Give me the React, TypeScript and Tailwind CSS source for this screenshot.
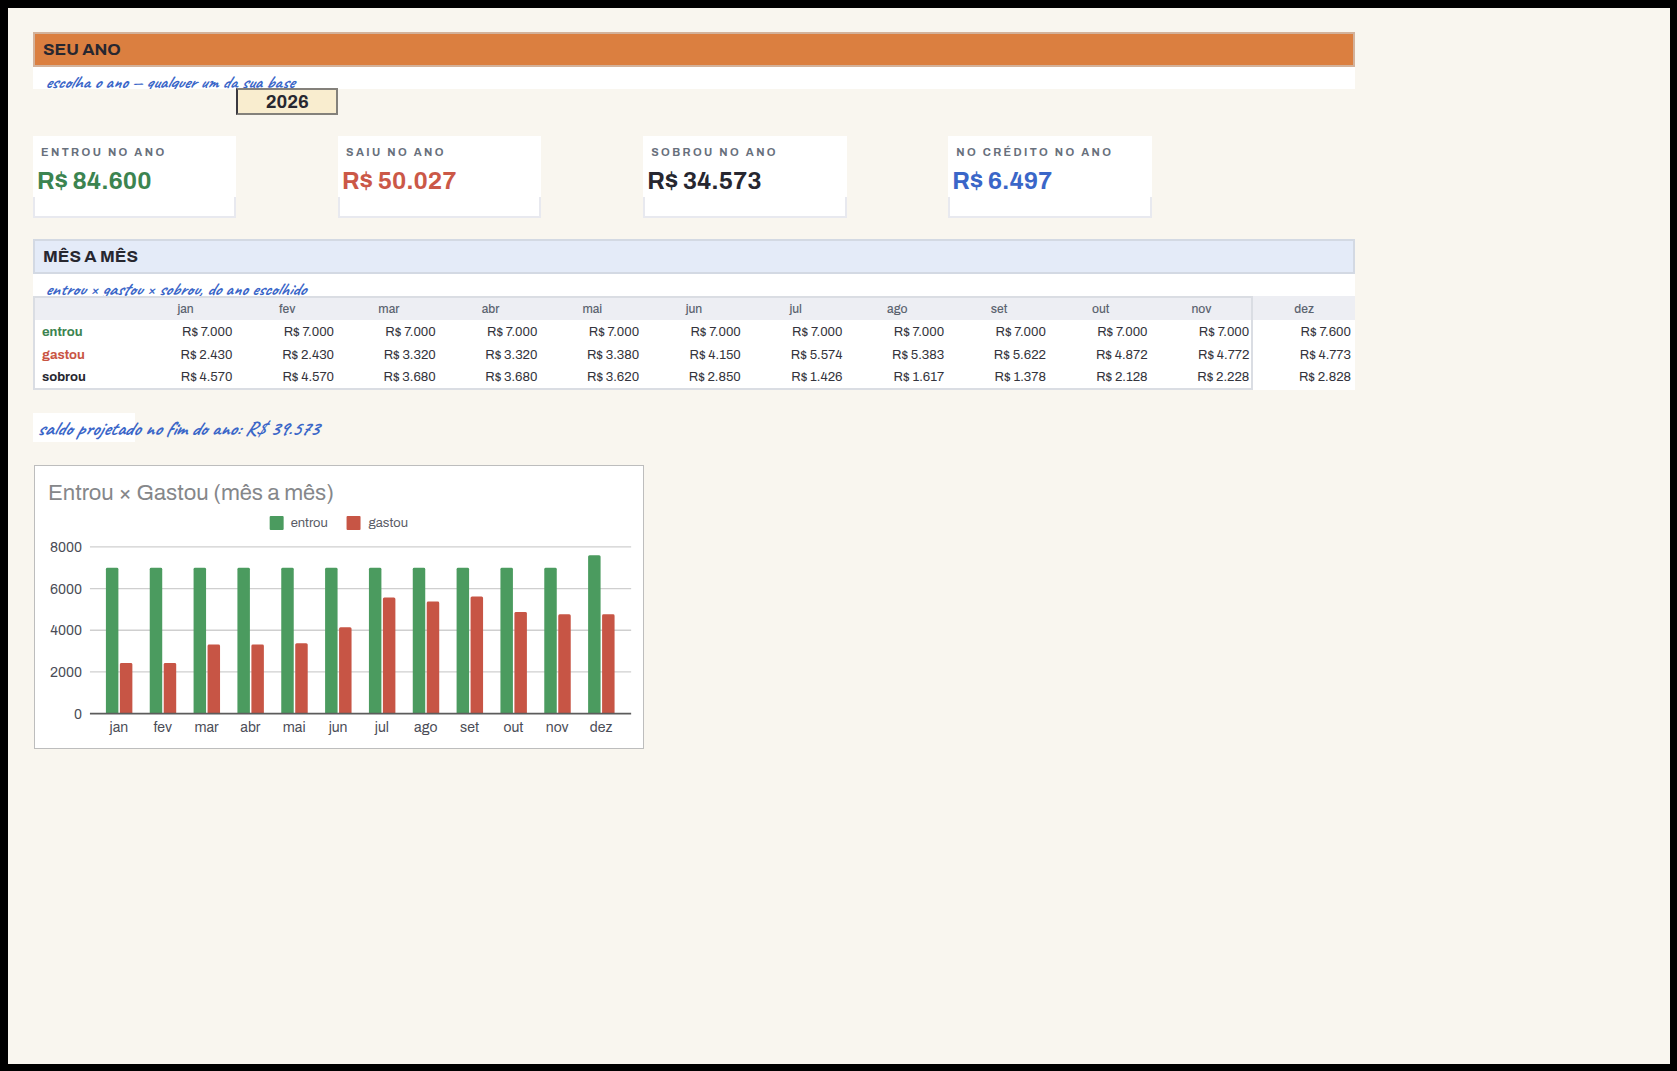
const months = ['jan', 'fev', 'mar', 'abr', 'mai', 'jun', 'jul', 'ago', 'set', 'out', 'nov', 'dez'];

const entrou = [7000, 7000, 7000, 7000, 7000, 7000, 7000, 7000, 7000, 7000, 7000, 7600];
const gastou = [2430, 2430, 3320, 3320, 3380, 4150, 5574, 5383, 5622, 4872, 4772, 4773];
const sobrou = [4570, 4570, 3680, 3680, 3620, 2850, 1426, 1617, 1378, 2128, 2228, 2828];

const rows = [
  { label: 'entrou', color: 'text-[#3c8450]', values: entrou },
  { label: 'gastou', color: 'text-[#c95544]', values: gastou },
  { label: 'sobrou', color: 'text-[#272730]', values: sobrou },
];

const cards = [
  { label: 'ENTROU NO ANO', value: 84600, color: 'text-[#3c8450]' },
  { label: 'SAIU NO ANO', value: 50027, color: 'text-[#cb5847]' },
  { label: 'SOBROU NO ANO', value: 34573, color: 'text-[#272730]' },
  { label: 'NO CRÉDITO NO ANO', value: 6497, color: 'text-[#3a66c8]' },
];

function money(value: number) {
  return 'R$ ' + String(value).replace(/\B(?=(\d{3})+$)/g, '.');
}

function Banner({ title, className }: { title: string; className: string }) {
  return (
    <h2 className={`flex h-[35px] items-center border-2 pt-px pl-2 text-[17px] font-bold text-[#272730] ${className}`}>
      {title}
    </h2>
  );
}

function Note({ children }: { children: string }) {
  return (
    <p className="h-[22px] overflow-hidden whitespace-nowrap bg-white pt-2 pl-3 font-[Caveat,Lato,cursive] text-[18px] leading-[14px] font-semibold italic text-[#3a66c8]">
      {children}
    </p>
  );
}

function StatCard({ label, value, color }: { label: string; value: number; color: string }) {
  return (
    <div className="col-span-2">
      <div className="h-[61px] bg-white pt-2">
        <div className="whitespace-nowrap pl-2 text-[11px] leading-4 font-bold tracking-[0.22em] text-[#68707c]">
          {label}
        </div>
        <div className={`mt-[5px] whitespace-nowrap pl-1 text-[24px] leading-8 font-bold ${color}`}>{money(value)}</div>
      </div>
      <div className="h-[21px] border-2 border-t-0 border-[#e8e9ef] bg-white" />
    </div>
  );
}

function MonthTable() {
  return (
    <table className="w-full table-fixed border-separate border-spacing-0 text-[12px] leading-4 text-[#34343c]">
      <thead>
        <tr className="h-6 bg-[#edeef3] text-[#5c6470]">
          <th className="border-t-2 border-l-2 border-[#dadde3]" aria-label="categoria" />
          {months.map((month) => (
            <th
              key={month}
              scope="col"
              className={`border-t-2 p-0 font-medium ${month === 'dez' ? 'border-[#edeef3]' : 'border-[#dadde3]'} ${month === 'nov' ? 'border-r-2' : ''}`}
            >
              {month}
            </th>
          ))}
        </tr>
      </thead>
      <tbody>
        {rows.map((row, r) => {
          const last = r === rows.length - 1;
          return (
            <tr key={row.label} className={`bg-white ${last ? 'h-6' : 'h-[23px]'}`}>
              <th
                scope="row"
                className={`border-l-2 border-[#dadde3] p-0 pl-[7px] text-left text-[13px] font-bold ${row.color} ${last ? 'border-b-2' : ''}`}
              >
                {row.label}
              </th>
              {row.values.map((value, i) => (
                <td
                  key={months[i]}
                  className={`p-0 text-right text-[13px] ${i === 10 ? 'border-r-2 pr-0.5' : 'pr-1'} ${i === 11 ? 'border-white' : 'border-[#dadde3]'} ${last ? 'border-b-2' : ''}`}
                >
                  {money(value)}
                </td>
              ))}
            </tr>
          );
        })}
      </tbody>
    </table>
  );
}

// plot area of the chart, in viewBox units
const BASE = 248;
const TOP = 81;
const scaleY = (value: number) => BASE - ((BASE - TOP) * value) / 8000;

function Bar({ x, value, fill }: { x: number; value: number; fill: string }) {
  const y = scaleY(value);
  return <path d={`M${x} ${BASE}V${y + 1.5}q0 -1.5 1.5 -1.5h9.5q1.5 0 1.5 1.5V${BASE}z`} fill={fill} />;
}

function Chart() {
  return (
    <figure className="ml-px w-6/13 border border-[#bdbdbd] bg-white">
      <svg viewBox="0 0 609 282" className="block w-full" role="img" aria-label="Entrou × Gastou (mês a mês)">
        <text x="13" y="34" fontSize="22" fill="#85878a">
          Entrou × Gastou (mês a mês)
        </text>

        <rect x="235" y="50" width="14" height="14" rx="1" fill="#4b9b5f" />
        <text x="256" y="61" fontSize="13" fill="#5a5c66">entrou</text>
        <rect x="312" y="50" width="14" height="14" rx="1" fill="#c75545" />
        <text x="334" y="61" fontSize="13" fill="#5a5c66">gastou</text>

        {[8000, 6000, 4000, 2000].map((tick) => (
          <line key={tick} x1="55" x2="597" y1={scaleY(tick)} y2={scaleY(tick)} stroke="#cfcfcf" strokeWidth="1.3" />
        ))}
        {[8000, 6000, 4000, 2000, 0].map((tick) => (
          <text key={tick} x="47" y={scaleY(tick) + 5} fontSize="14" textAnchor="end" fill="#4a4c56">
            {tick}
          </text>
        ))}

        {months.map((month, i) => (
          <g key={month}>
            <Bar x={71 + i * 43.9} value={entrou[i]} fill="#4b9b5f" />
            <Bar x={85 + i * 43.9} value={gastou[i]} fill="#c75545" />
            <text x={84 + i * 43.9} y="266" fontSize="14" textAnchor="middle" fill="#4a4c56">
              {month}
            </text>
          </g>
        ))}
        <line x1="55" x2="597" y1={BASE} y2={BASE} stroke="#5c5c5c" strokeWidth="1.6" />
      </svg>
    </figure>
  );
}

export default function App() {
  return (
    <div className="min-h-screen border-t-8 border-r-[7px] border-b-[7px] border-l-8 border-black bg-[#f9f6ef] px-[25px] py-6 font-[Archivo,'Liberation_Sans',Arial,sans-serif]">
      <main className="w-full max-w-[1322px]">
        <Banner title="SEU ANO" className="border-[#d3b29b] bg-[#db7f40]" />
        <Note>escolha o ano — qualquer um da sua base</Note>

        <div className="-mt-px grid grid-cols-13">
          <select
            aria-label="Ano"
            defaultValue="2026"
            className="col-start-3 h-[27px] appearance-none border-2 border-[#84817b] border-l-[#3a3940] bg-[#f9edcf] text-center text-[18px] leading-6 font-bold text-[#272730] [text-align-last:center]"
          >
            <option>2026</option>
          </select>
        </div>

        <div className="mt-[21px] grid grid-cols-13">
          {cards.map((card, i) => (
            <div key={card.label} className={`grid ${i < 3 ? 'col-span-3 grid-cols-3' : 'col-span-2 grid-cols-2'}`}>
              <StatCard {...card} />
            </div>
          ))}
        </div>

        <Banner title="MÊS A MÊS" className="mt-[21px] border-[#d3d9e3] bg-[#e4ebf8]" />
        <Note>entrou × gastou × sobrou, do ano escolhido</Note>
        <MonthTable />

        <div className="mt-[23px] grid grid-cols-13">
          <p className="h-[29px] whitespace-nowrap bg-white pt-[6px] pl-1 font-[Caveat,Lato,cursive] text-[20px] leading-5 font-semibold italic text-[#3a66c8]">
            saldo projetado no fim do ano: R$ 39.573
          </p>
        </div>

        <div className="mt-[23px]">
          <Chart />
        </div>
      </main>
    </div>
  );
}
